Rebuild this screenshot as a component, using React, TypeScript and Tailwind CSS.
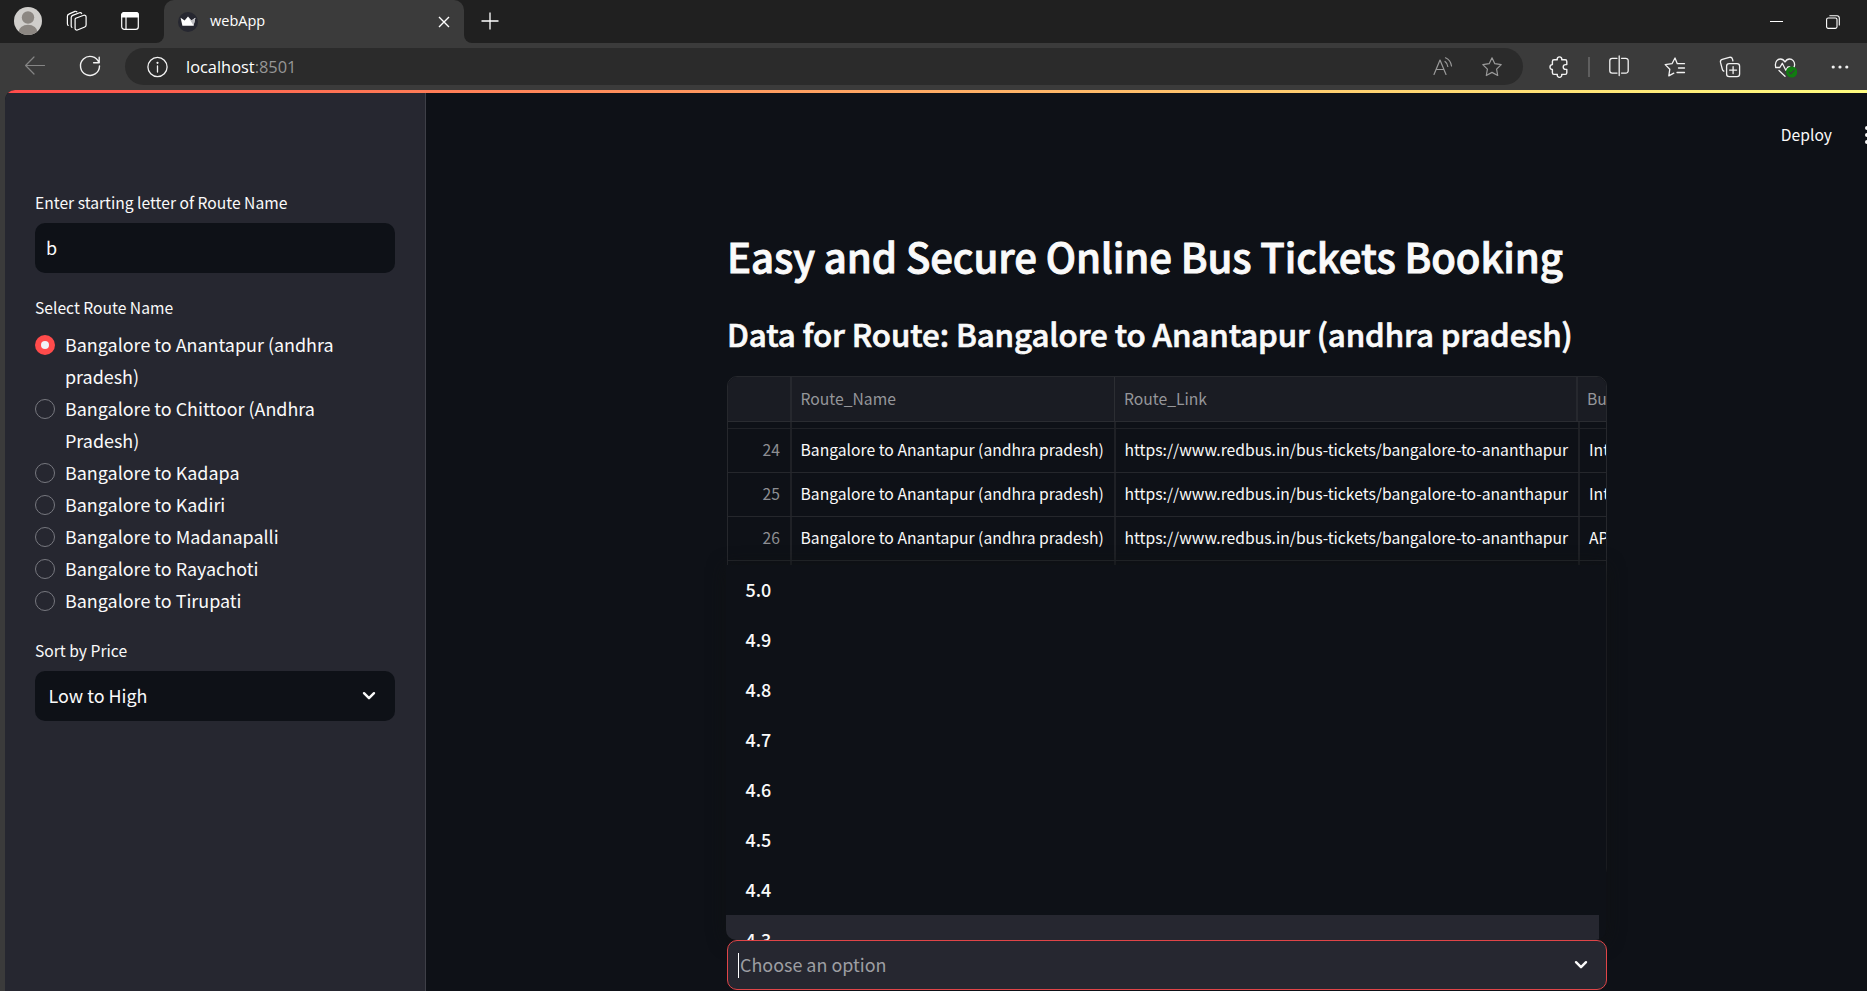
import type { ReactNode } from "react";
import clsx from "clsx";

const ROUTES = [
  "Bangalore to Anantapur (andhra pradesh)",
  "Bangalore to Chittoor (Andhra Pradesh)",
  "Bangalore to Kadapa",
  "Bangalore to Kadiri",
  "Bangalore to Madanapalli",
  "Bangalore to Rayachoti",
  "Bangalore to Tirupati",
];

const ROWS = [
  { id: 24, bus: "Intercity" },
  { id: 25, bus: "Intercity" },
  { id: 26, bus: "APSRTC" },
];

const RATINGS = ["5.0", "4.9", "4.8", "4.7", "4.6", "4.5", "4.4", "4.3"];

function Icon({ children, className }: { children: ReactNode; className?: string }) {
  return (
    <svg
      viewBox="0 0 24 24"
      className={clsx("size-6 shrink-0", className)}
      fill="none"
      stroke="currentColor"
      strokeWidth="1.2"
      strokeLinecap="round"
      strokeLinejoin="round"
    >
      {children}
    </svg>
  );
}

function Chevron() {
  return (
    <svg viewBox="0 0 14 10" className="h-[10px] w-[14px]" fill="none" stroke="#fafafa" strokeWidth="2.4" strokeLinecap="round" strokeLinejoin="round">
      <path d="M2 2.2 7 7.2 12 2.2" />
    </svg>
  );
}

const STAR = "M12 2.8l2.8 5.9 6.4.9-4.6 4.5 1.1 6.4L12 17.4l-5.7 3.1 1.1-6.4L2.8 9.6l6.4-.9z";

function TabStrip() {
  return (
    <div className="flex h-[43px] shrink-0 items-center bg-[#202020] text-white">
      <svg viewBox="0 0 28 28" className="-mt-px ml-[14px] size-7 shrink-0">
        <clipPath id="avatar">
          <circle cx="14" cy="14" r="14" />
        </clipPath>
        <g clipPath="url(#avatar)">
          <rect width="28" height="28" fill="#d0cecb" />
          <circle cx="14" cy="10.5" r="6.2" fill="#8c8782" />
          <ellipse cx="14" cy="25.4" rx="9.6" ry="7.6" fill="#8c8782" />
        </g>
      </svg>
      <Icon className="-mt-px ml-[23px]">
        <path d="M10.7 9.2 18.8 6.3a1.7 1.7 0 0 1 2.3 1.6v8.2a2 2 0 0 1-1.3 1.9l-7.4 3a1.7 1.7 0 0 1-2.3-1.6v-8.3a2 2 0 0 1 .6-1.9z" />
        <path d="M6.9 18.4a2 2 0 0 1-.7-1.4V8.6a2.4 2.4 0 0 1 1.5-2.2l6.8-2.7a1.8 1.8 0 0 1 2.2.8" />
        <path d="M3.2 16.4a2 2 0 0 1-.8-1.6V7.3a2.4 2.4 0 0 1 1.5-2.2l6-2.7a1.8 1.8 0 0 1 2 .5" />
      </Icon>
      <svg viewBox="0 0 18 18" className="-mt-px ml-[32px] size-[18px] shrink-0" fill="none" stroke="white" strokeWidth="1.2">
        <rect x=".7" y=".7" width="16.6" height="16.6" rx="2.6" />
        <path d="M.7 5V3A2.3 2.3 0 0 1 3 .7h12A2.3 2.3 0 0 1 17.3 3v2z" fill="white" />
        <path d="M5 5v12" />
      </svg>
      <div className="ml-[17px] h-full w-2 bg-[#3b3b3b]">
        <div className="h-full rounded-br-[10px] bg-[#202020]" />
      </div>
      <div className="flex h-full w-[300px] items-center rounded-t-[10px] bg-[#3b3b3b]">
        <svg viewBox="0 0 20 20" className="ml-[14px] size-5">
          <circle cx="10" cy="10" r="10" fill="#262730" />
          <path d="M2.6 5.7 6.6 8.6 10 4.600l3.4 4 4-2.9-1.8 8H4.4z" fill="#fff" />
          <path d="m10 4.6 3.4 4 4-2.9-1.8 8z" fill="#bfbfc3" />
        </svg>
        <span className="ml-[12px] -translate-y-px font-['Open_Sans',sans-serif] text-[14.5px] leading-5">webApp</span>
        <svg viewBox="0 0 12 12" className="mr-[14px] ml-auto size-3" stroke="white" strokeWidth="1.4">
          <path d="M1 1l10 10M11 1 1 11" />
        </svg>
      </div>
      <div className="h-full w-2 bg-[#3b3b3b]">
        <div className="h-full rounded-bl-[10px] bg-[#202020]" />
      </div>
      <svg viewBox="0 0 18 18" className="-mt-[2px] ml-[9px] size-[18px]" stroke="white" strokeWidth="1.3">
        <path d="M9 .5v17M.5 9h17" />
      </svg>
      <div className="mr-[43px] ml-auto h-px w-[13px] bg-white" />
      <svg viewBox="0 0 14 14" className="mr-[27px] size-[14px]" fill="none" stroke="white" strokeWidth="1.1">
        <rect x=".6" y="3" width="10.4" height="10.4" rx="1.6" />
        <path d="M3.4.8H11A2.3 2.3 0 0 1 13.3 3v7.6" />
      </svg>
    </div>
  );
}

function Toolbar() {
  return (
    <div className="flex h-[47px] shrink-0 items-center bg-[#3b3b3b] text-[#f2f2f2]">
      <Icon className="-mt-px ml-[23px] text-[#858585]">
        <path d="M21.5 11.5H2.6M11 3 2.6 11.500 11 20" />
      </Icon>
      <Icon className="-mt-px ml-[31px]">
        <path strokeWidth="1.4" d="M20.9 8.6A9.5 9.5 0 1 0 21.5 12M21.2 3.2v5.6h-5.6" />
      </Icon>
      <div className="ml-[23px] flex h-[37px] w-[1398px] items-center rounded-full bg-[#2b2b2b]">
        <Icon className="ml-[20px]">
          <circle cx="12.5" cy="12" r="9.6" strokeWidth="1.3" />
          <path d="M12.5 11v6" strokeWidth="1.3" />
          <circle cx="12.5" cy="7.8" r=".5" fill="currentColor" />
        </Icon>
        <span className="ml-[17px] font-['Open_Sans',sans-serif] text-[16.4px] leading-6 text-white">
          localhost<span className="text-[#969696]">:8501</span>
        </span>
        <Icon className="ml-auto text-[#9a9a9a]">
          <path d="M3 19.5 9 5l6 14.500M5.2 14.5h7.6" />
          <path d="M14 6.5a7 7 0 0 1 2.8 5M14.5 2.8a10.5 10.5 0 0 1 6 8.2" />
        </Icon>
        <Icon className="mr-[19px] ml-[25px] text-[#9a9a9a]">
          <path d={STAR} />
        </Icon>
      </div>
      <Icon className="ml-[24px]">
        <path strokeWidth="1.4" d="M7 4.8h3.300a2.3 2.3 0 1 1 4.4 0h3.500a1.6 1.6 0 0 1 1.6 1.6v3.200h-1.2a2.4 2.4 0 0 0 0 4.8h1.2v3.400a1.6 1.6 0 0 1-1.6 1.6h-3.500a2.3 2.3 0 1 1-4.4 0H7a1.6 1.6 0 0 1-1.6-1.6v-3.400a2.4 2.4 0 1 1 0-4.8V6.4A1.6 1.6 0 0 1 7 4.8z" />
      </Icon>
      <div className="ml-[17px] h-5 w-[2px] bg-[#5f5f5f]" />
      <Icon className="-mt-px ml-[17px]">
        <path strokeWidth="1.3" d="M10 4.3H5.2a2.4 2.4 0 0 0-2.4 2.4v10a2.4 2.4 0 0 0 2.4 2.4H10M14.500 4.3h4.300a2.4 2.4 0 0 1 2.4 2.4v10a2.4 2.4 0 0 1-2.4 2.4h-4.300M12.2 2v19.5" />
      </Icon>
      <Icon className="ml-[32px]">
        <path strokeWidth="1.3" d="M20.5 8.7H14.3L12 3 9 8.7l-6.8.9 4.6 4.6-1 6.6 5-2.6M15.500 13H21.500M14 17.5h7.500M16 8.7h5.5" />
      </Icon>
      <Icon className="ml-[31px]">
        <rect x="8.6" y="8.6" width="13" height="13" rx="2.6" strokeWidth="1.3" />
        <path strokeWidth="1.3" d="M15.1 11.6v7M11.6 15.1h7M5.8 16.2a2.6 2.6 0 0 1-1.4-1.7L2.5 7.4a2.6 2.6 0 0 1 1.8-3.1l7-1.9a2.6 2.6 0 0 1 3.2 1.8l.4 1.6" />
      </Icon>
      <Icon className="ml-[31px]">
        <path strokeWidth="1.3" d="M3 12.5a5.5 5.5 0 0 1-.6-2.700C2.4 6.5 4.6 4 7.4 4c2 0 3.5 1 4.6 3 1.1-2 2.600-3 4.600-3 2.8 0 5 2.5 5 5.5 0 1-.2 1.8-.6 2.6M2.600 12.500h4.200l2.5-4.200 3.5 7 2-3.300h2M6 15.500l6 5.800" />
        <circle cx="18.7" cy="17" r="5.6" fill="#107c10" stroke="none" />
        <path d="m16.4 17.2 1.500 1.500 3.200-3.300" stroke="#3b3b3b" strokeWidth="1.3" />
      </Icon>
      <Icon className="ml-[31px]">
        <g fill="currentColor" stroke="none">
          <circle cx="5.2" cy="12" r="1.6" />
          <circle cx="12" cy="12" r="1.6" />
          <circle cx="18.8" cy="12" r="1.6" />
        </g>
      </Icon>
    </div>
  );
}

function Label({ children, className }: { children: ReactNode; className?: string }) {
  return <div className={clsx("text-[15.65px] leading-7", className)}>{children}</div>;
}

function Sidebar() {
  return (
    <aside className="flex w-[421px] shrink-0 flex-col border-r border-[#3e3f47] bg-[#262730] px-[30px] pt-[96px]">
      <Label>Enter starting letter of Route Name</Label>
      <div className="mt-[6px] flex h-[50px] w-[360px] items-center rounded-[10px] bg-[#0e1117] pb-[2px] pl-[11px]">b</div>
      <Label className="mt-[21px]">Select Route Name</Label>
      <div className="mt-[6px] flex flex-col">
        {ROUTES.map((route, i) => (
          <div key={route} className="flex gap-[10px]">
            <div
              className={clsx(
                "mt-[7px] flex size-5 shrink-0 items-center justify-center rounded-full",
                i === 0 ? "bg-[#ff4b4b]" : "border border-[#77787f]",
              )}
            >
              {i === 0 && <div className="size-2 rounded-full bg-[#f0f2f6]" />}
            </div>
            <div className="w-[290px] leading-8">{route}</div>
          </div>
        ))}
      </div>
      <Label className="mt-[21px]">Sort by Price</Label>
      <div className="mt-[6px] flex h-[50px] w-[360px] items-center justify-between rounded-[10px] bg-[#0e1117] pr-[19px] pl-[13.5px]">
        <span className="pb-[2px]">Low to High</span>
        <Chevron />
      </div>
    </aside>
  );
}

function DataTable() {
  return (
    <div className="mt-[21px] h-[502px] w-[880px] overflow-hidden rounded-[10px] border border-[#26282d] text-[15.7px] whitespace-nowrap">
      <div className="grid h-[45px] grid-cols-[64px_323px_463px_1fr] items-stretch border-b border-[#2a2c31] bg-[#1a1c23] leading-[44px] text-[#95969a]">
        <div className="border-r-2 border-[#26282e]" />
        <div className="border-r border-[#2c2e33] pl-[8.5px]">Route_Name</div>
        <div className="border-r-2 border-[#26282e] pl-[9px]">Route_Link</div>
        <div className="overflow-hidden pl-[9px]">Bus_Name</div>
      </div>
      <div className="grid h-[7px] grid-cols-[64px_324px_464px_1fr] border-b border-[#202227]">
        <div className="border-r-2 border-[#1f2126]" />
        <div className="border-r-2 border-[#1f2126]" />
        <div className="border-r-2 border-[#1f2126]" />
      </div>
      {ROWS.map((row) => (
        <div key={row.id} className="grid h-11 grid-cols-[64px_324px_464px_1fr] border-b border-[#25272c] leading-[42px]">
          <div className="border-r-2 border-[#1f2126] pr-[10px] text-right text-[#8d8e92]">{row.id}</div>
          <div className="border-r-2 border-[#1f2126] pl-[8.5px]">Bangalore to Anantapur (andhra pradesh)</div>
          <div className="border-r-2 border-[#1f2126] pl-[8.500px]">https://www.redbus.in/bus-tickets/bangalore-to-ananthapur</div>
          <div className="overflow-hidden pl-[9px]">{row.bus}</div>
        </div>
      ))}
      <div className="grid h-11 grid-cols-[64px_324px_464px_1fr]">
        <div className="border-r-2 border-[#1f2126]" />
        <div className="border-r-2 border-[#1f2126]" />
        <div className="border-r-2 border-[#1f2126]" />
      </div>
    </div>
  );
}

function RatingMenu() {
  return (
    <div className="absolute bottom-[50px] -left-px h-[375px] w-[880px] overflow-hidden rounded-b-[10px] bg-[#0e1117] pr-[7px] shadow-[0_2px_18px_#101213]">
      {RATINGS.map((rating) => (
        <div key={rating} className={clsx("h-[50px] pl-[19.5px] leading-[48px] font-medium", rating === "4.3" && "bg-[#262730]")}>
          {rating}
        </div>
      ))}
    </div>
  );
}

function Main() {
  return (
    <main className="flex min-w-0 flex-1 flex-col overflow-hidden">
      <header className="flex h-[84px] shrink-0 items-center justify-end text-[15.65px]">
        <span className="leading-7">Deploy</span>
        <div className="ml-[33px] flex w-[2px] flex-col gap-[3px] overflow-hidden">
          <div className="size-1 rounded-full bg-[#fafafa]" />
          <div className="size-1 rounded-full bg-[#fafafa]" />
          <div className="size-1 rounded-full bg-[#fafafa]" />
        </div>
      </header>
      <div className="ml-[301px] flex w-[880px] flex-col pt-[52px] whitespace-nowrap">
        <h1 className="text-[40.18px] leading-[54px] font-medium tracking-[-0.11px] [-webkit-text-stroke:0.9px_#fafafa]">
          Easy and Secure Online Bus Tickets Booking
        </h1>
        <h2 className="mt-[30px] text-[31.25px] leading-[42px] font-medium tracking-[-0.07px] [-webkit-text-stroke:0.7px_#fafafa]">
          Data for Route: Bangalore to Anantapur (andhra pradesh)
        </h2>
        <DataTable />
        <div className="relative mt-[62px]">
          <RatingMenu />
          <div className="relative flex h-[50px] items-center justify-between rounded-[10px] border border-[#e04548] bg-[#262730] pr-[18px] pl-[10px]">
            <div className="flex items-center">
              <div className="h-[25px] w-px bg-white" />
              <span className="ml-px pb-px text-[#9d9ea2]">Choose an option</span>
            </div>
            <Chevron />
          </div>
        </div>
      </div>
    </main>
  );
}

export default function App() {
  return (
    <div className="flex h-[991px] w-[1867px] flex-col overflow-hidden bg-[#3b3b3b]">
      <TabStrip />
      <Toolbar />
      <div className="flex min-h-0 flex-1 flex-col pl-[5px]">
        <div className="flex min-h-0 flex-1 flex-col overflow-hidden rounded-tl-[10px] bg-[#0e1117] font-['Noto_Sans_CJK_SC',sans-serif] text-[17.93px] text-[#fafafa]">
          <div className="h-[3px] shrink-0 bg-linear-to-r from-[#ff4b4b] to-[#fffd80]" />
          <div className="flex min-h-0 flex-1">
            <Sidebar />
            <Main />
          </div>
        </div>
      </div>
    </div>
  );
}
